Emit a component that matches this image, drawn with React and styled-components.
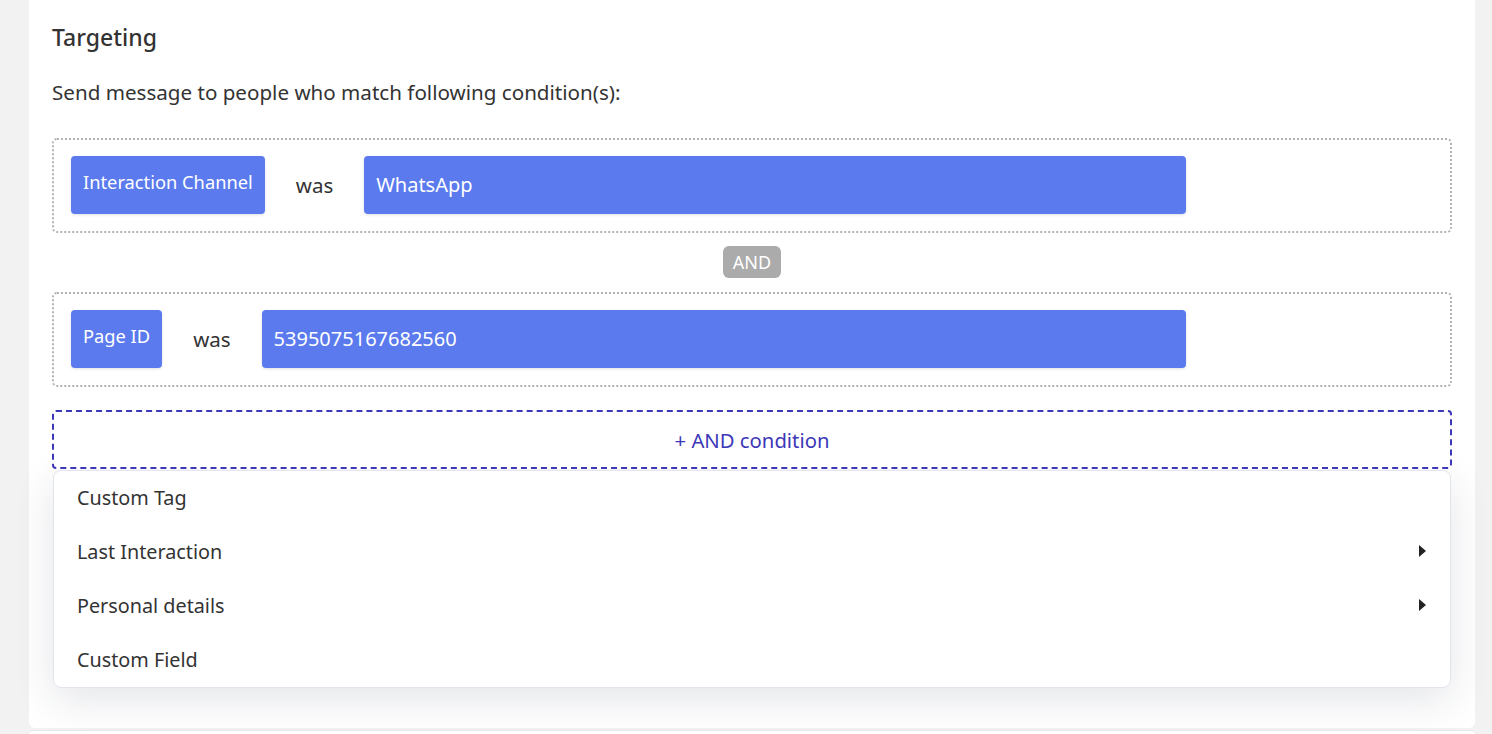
import React from 'react';
import styled, { createGlobalStyle } from 'styled-components';

const Global = createGlobalStyle`
  body {
    margin: 0;
    background: #f2f2f2;
    font-family: "Noto Sans", "Open Sans", sans-serif;
    color: #333;
  }
`;

const Page = styled.div`
  padding: 0 17px 0 29px;
  height: 734px;
  overflow: hidden;
  display: flex;
  flex-direction: column;
  gap: 2px;
`;

const Card = styled.div`
  background: #fff;
  border-radius: 0 0 6px 6px;
  padding: 23px 23px 40px;
`;

const NextCard = styled.div`
  background: #fff;
  border-top: 1px solid #e6e6e6;
  border-radius: 6px 6px 0 0;
  height: 20px;
`;

const Title = styled.h2`
  margin: 0;
  font-size: 23px;
  line-height: 28px;
  font-weight: 500;
  color: #333;
`;

const Subtitle = styled.p`
  margin: 28px 0 33px;
  font-size: 20.6px;
  line-height: 26px;
  color: #333;
`;

const ConditionBox = styled.div`
  border: 2px dotted #b3b3b3;
  border-radius: 5px;
  padding: 16px 17px 17px;
`;

const Row = styled.div`
  display: flex;
  align-items: center;
  width: 1115px;
`;

const Chip = styled.div`
  background: #5a7aee;
  color: #fff;
  height: 58px;
  border-radius: 4px;
  padding: 12px 12px 0;
  box-sizing: border-box;
  font-size: 18.3px;
  line-height: 28px;
  white-space: nowrap;
  box-shadow: 0 1px 3px rgba(0, 0, 0, 0.12);
`;

const Value = styled(Chip)`
  flex: 1;
  padding-top: 15px;
  font-size: 20px;
`;

const Was = styled.span`
  padding: 0 31px;
  font-size: 20.5px;
  color: #333;
`;

const Joiner = styled.div`
  display: flex;
  justify-content: center;
  margin: 13px 0 14px;
`;

const AndBadge = styled.span`
  background: #ababab;
  color: #fff;
  font-size: 18px;
  line-height: 32px;
  height: 32px;
  width: 58px;
  text-align: center;
  border-radius: 6px;
`;

const AddButton = styled.button`
  margin-top: 23px;
  width: 100%;
  height: 59px;
  background: #fff;
  border: 2px dashed #3d38b8;
  border-radius: 4px;
  color: #3d38b8;
  font-family: inherit;
  font-size: 20.3px;
  cursor: pointer;
`;

const Menu = styled.ul`
  list-style: none;
  margin: 1px 1px 0;
  padding: 0;
  border: 1px solid #e1e4ea;
  border-radius: 8px;
  background: #fff;
  box-shadow: 0 12px 40px rgba(30, 40, 70, 0.12);
`;

const MenuItem = styled.li`
  height: 54px;
  display: flex;
  align-items: center;
  justify-content: space-between;
  padding: 0 24px 2px 23px;
  box-sizing: border-box;
  font-size: 19.8px;
  color: #333;
`;

const Caret = styled.span`
  width: 0;
  height: 0;
  border-top: 6px solid transparent;
  border-bottom: 6px solid transparent;
  border-left: 7px solid #222;
`;

const conditions = [
  { field: 'Interaction Channel', value: 'WhatsApp' },
  { field: 'Page ID', value: '5395075167682560' },
];

const menu = [
  { label: 'Custom Tag' },
  { label: 'Last Interaction', sub: true },
  { label: 'Personal details', sub: true },
  { label: 'Custom Field' },
];

export default function App() {
  return (
    <>
      <Global />
      <Page>
        <Card>
          <Title>Targeting</Title>
          <Subtitle>Send message to people who match following condition(s):</Subtitle>
          {conditions.map((c, i) => (
            <React.Fragment key={c.field}>
              {i > 0 && (
                <Joiner>
                  <AndBadge>AND</AndBadge>
                </Joiner>
              )}
              <ConditionBox>
                <Row>
                  <Chip>{c.field}</Chip>
                  <Was>was</Was>
                  <Value>{c.value}</Value>
                </Row>
              </ConditionBox>
            </React.Fragment>
          ))}
          <AddButton>+ AND condition</AddButton>
          <Menu>
            {menu.map((m) => (
              <MenuItem key={m.label}>
                {m.label}
                {m.sub && <Caret />}
              </MenuItem>
            ))}
          </Menu>
        </Card>
        <NextCard />
      </Page>
    </>
  );
}
